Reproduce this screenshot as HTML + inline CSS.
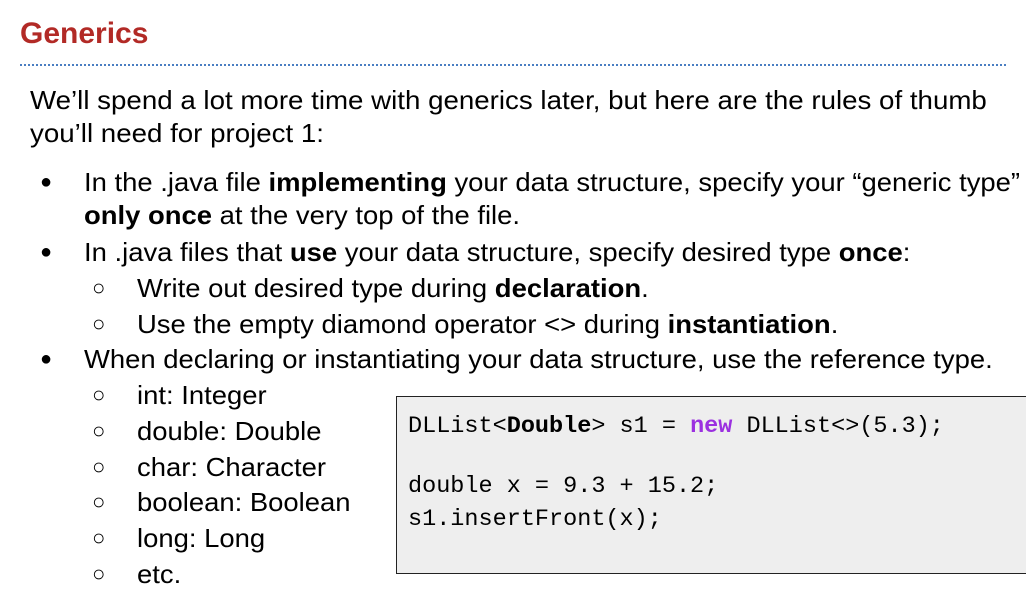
<!DOCTYPE html>
<html><head><meta charset="utf-8"><style>
body{margin:0;width:1026px;height:586px;background:#fff;position:relative;overflow:hidden;font-family:"Liberation Sans",sans-serif;color:#000}
.l{position:absolute;white-space:nowrap;font-size:26px;line-height:30px;transform:scaleX(1.055);transform-origin:0 0}
.b{position:absolute;font-size:20px;line-height:30px}
.c{position:absolute;font-size:22px;line-height:30px}
h1{position:absolute;left:20px;top:14px;margin:0;font-size:30px;line-height:40px;color:#b22a26;font-weight:bold}
.dots{position:absolute;left:20px;top:64px;width:986px;border-top:2px dotted #4a7ec2}
.code{position:absolute;left:396px;top:396px;width:640px;height:176px;background:#eeeeee;border:1px solid #222;font-family:"Liberation Mono",monospace;font-size:23.5px}
.code div{position:absolute;left:11px;white-space:pre;line-height:30px}
.kw{color:#9b30e0;font-weight:bold}
</style></head><body>
<h1>Generics</h1>
<div class="dots"></div>
<div class="l" style="left:30px;top:85px;transform:scaleX(1.065)">We’ll spend a lot more time with generics later, but here are the rules of thumb</div>
<div class="l" style="left:30px;top:118px;transform:scaleX(1.065)">you’ll need for project 1:</div>

<div class="b" style="left:40px;top:167px">●</div>
<div class="l" style="left:84px;top:167px">In the .java file <b>implementing</b> your data structure, specify your “generic type”</div>
<div class="l" style="left:84px;top:200px"><b>only once</b> at the very top of the file.</div>
<div class="b" style="left:40px;top:237px">●</div>
<div class="l" style="left:84px;top:237px">In .java files that <b>use</b> your data structure, specify desired type <b>once</b>:</div>
<div class="c" style="left:92px;top:273px">○</div>
<div class="l" style="left:137px;top:273px">Write out desired type during <b>declaration</b>.</div>
<div class="c" style="left:92px;top:309px">○</div>
<div class="l" style="left:137px;top:309px">Use the empty diamond operator &lt;&gt; during <b>instantiation</b>.</div>
<div class="b" style="left:40px;top:344px">●</div>
<div class="l" style="left:84px;top:344px">When declaring or instantiating your data structure, use the reference type.</div>
<div class="c" style="left:92px;top:380px">○</div>
<div class="l" style="left:137px;top:380px">int: Integer</div>
<div class="c" style="left:92px;top:416px">○</div>
<div class="l" style="left:137px;top:416px">double: Double</div>
<div class="c" style="left:92px;top:452px">○</div>
<div class="l" style="left:137px;top:452px">char: Character</div>
<div class="c" style="left:92px;top:487px">○</div>
<div class="l" style="left:137px;top:487px">boolean: Boolean</div>
<div class="c" style="left:92px;top:523px">○</div>
<div class="l" style="left:137px;top:523px">long: Long</div>
<div class="c" style="left:92px;top:559px">○</div>
<div class="l" style="left:137px;top:559px">etc.</div>

<div class="code">
<div style="top:15px">DLList&lt;<b>Double</b>&gt; s1 = <span class="kw">new</span> DLList&lt;&gt;(5.3);</div>
<div style="top:75px">double x = 9.3 + 15.2;</div>
<div style="top:108px">s1.insertFront(x);</div>
</div>
</body></html>
